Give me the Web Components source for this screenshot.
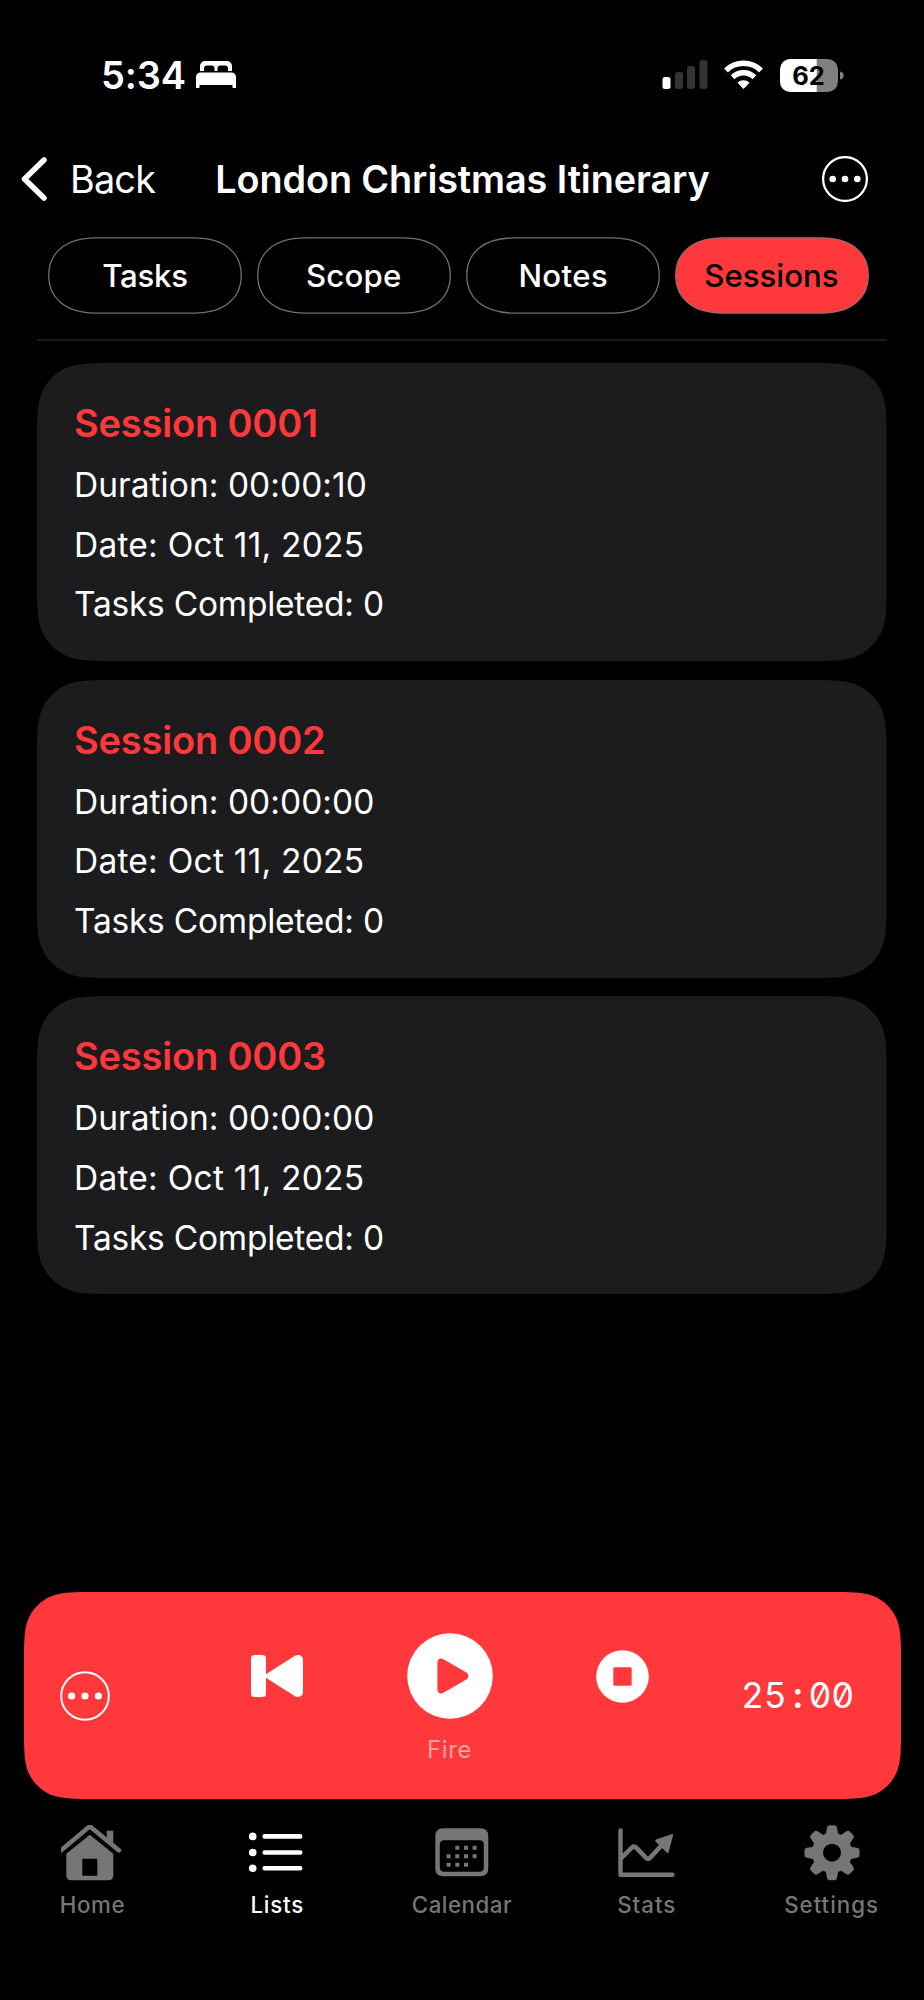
<!DOCTYPE html>
<html lang="en">
<head>
<meta charset="utf-8">
<title>London Christmas Itinerary</title>
<style>
html,body{margin:0;background:#000;}
body{width:924px;height:2000px;overflow:hidden;font-family:Inter,"Liberation Sans",sans-serif;color:#fff;}
</style>
</head>
<body>
<session-app></session-app>
<script>
const define = (name, html, setup) => {
  const template = document.createElement('template');
  template.innerHTML = html;
  customElements.define(name, class extends HTMLElement {
    connectedCallback() {
      if (this.shadowRoot) return;
      const root = this.attachShadow({ mode: 'open' });
      root.append(template.content.cloneNode(true));
      if (setup) setup(this, root);
    }
  });
};

// Outline of a rounded rectangle whose corners ease into the straight edges.
const smoothPath = (w, h, r) => {
  const a = 1.52866 * r, b = 1.08849 * r, c = 0.86841 * r, d = 0.63149 * r, e = 0.07491 * r, f = 0.37282 * r, g = 0.16906 * r;
  return `M${a} 0H${w - a}C${w - b} 0 ${w - c} 0 ${w - d} ${e}C${w - f} ${g} ${w - g} ${f} ${w - e} ${d}C${w} ${c} ${w} ${b} ${w} ${a}` +
    `V${h - a}C${w} ${h - b} ${w} ${h - c} ${w - e} ${h - d}C${w - g} ${h - f} ${w - f} ${h - g} ${w - d} ${h - e}C${w - c} ${h} ${w - b} ${h} ${w - a} ${h}` +
    `H${a}C${b} ${h} ${c} ${h} ${d} ${h - e}C${f} ${h - g} ${g} ${h - f} ${e} ${h - d}C0 ${h - c} 0 ${h - b} 0 ${h - a}` +
    `V${a}C0 ${b} 0 ${c} ${e} ${d}C${g} ${f} ${f} ${g} ${d} ${e}C${c} 0 ${b} 0 ${a} 0Z`;
};

define('status-bar', `
<style>
:host{display:flex;height:149px;box-sizing:border-box;padding:1px 79px 0 101px;align-items:center;justify-content:space-between}
.left,.right{display:flex;align-items:center}
.time{font-size:38px;font-weight:600;line-height:46px;letter-spacing:-.15px}
svg{display:block}
.bed{margin-left:10px}
.wifi{margin-left:16px}
.battery{position:relative;margin-left:17.500px}
.battery span{position:absolute;left:0;top:0;width:57px;height:33px;line-height:33px;text-align:center;color:#000;font-size:25.500px;font-weight:700}
</style>
<div class="left"><span class="time">5:34</span>
<svg class="bed" width="40" height="28" viewBox="0 0 40 28" fill="#fff"><path d="M4 10V5a5 5 0 0 1 5-5h22a5 5 0 0 1 5 5v5h-4V7.500a3 3 0 0 0-3-3h-4.500a3 3 0 0 0-3 3V10h-3V7.500a3 3 0 0 0-3-3H11a3 3 0 0 0-3 3V10z"/><path d="M0 27V16a4.500 4.500 0 0 1 4.500-4.500h31A4.500 4.500 0 0 1 40 16v11h-3.500v-3h-33v3z"/></svg></div>
<div class="right">
<svg width="46" height="30" viewBox="0 0 46 30"><rect x=".5" y="17" width="8" height="12" rx="2.500" fill="#fff"/><g fill="#333"><rect x="13" y="12" width="8" height="17" rx="2.500"/><rect x="25" y="6" width="8" height="23" rx="2.500"/><rect x="37.500" y="0" width="8" height="29" rx="2.500"/></g></svg>
<svg class="wifi" width="39" height="30" viewBox="0 0 39 30" fill="none" stroke="#fff"><path d="M2 10.400A25 25 0 0 1 37 10.400" stroke-width="5.600"/><path d="M8.600 17.200A15.600 15.600 0 0 1 30.400 17.200" stroke-width="5.400"/><path d="M19.500 29l-6-6.200a8.500 8.500 0 0 1 12 0z" fill="#fff" stroke="none"/></svg>
<div class="battery"><svg width="65" height="33" viewBox="0 0 65 33"><defs><clipPath id="b"><rect width="58" height="33" rx="10.500"/></clipPath></defs><g clip-path="url(#b)"><rect width="58" height="33" fill="#808080"/><rect width="36.700" height="33" fill="#fff"/></g><path d="M60 12.500c5 1 5 7 0 8z" fill="#808080"/></svg><span>62</span></div>
</div>`);

define('more-icon', `
<style>:host{display:block}svg{display:block;width:100%;height:100%}.ring{stroke-width:var(--sw,2)}</style>
<svg viewBox="0 0 50 50" fill="none" stroke="#fff"><circle class="ring" cx="25" cy="25" r="23.800"/><g fill="#fff" stroke="none"><circle cx="11.600" cy="25" r="3.600"/><circle cx="25" cy="25" r="3.600"/><circle cx="38.400" cy="25" r="3.600"/></g></svg>`);

define('nav-header', `
<style>
:host{display:grid;grid-template-columns:minmax(0,1fr) auto minmax(0,1fr);align-items:center;height:60px;padding:0 20.500px 0 21.500px;font-size:37.800px}
.back{display:flex;align-items:center}
.back svg{display:block;margin-left:-.500px}
.back span{margin-left:23px;letter-spacing:-.8px}
h1{margin:0;font-size:inherit;font-weight:600;letter-spacing:-.1px;white-space:nowrap}
more-icon{width:46px;height:46px;justify-self:end;margin-right:35.500px;--sw:2.500}
</style>
<div class="back"><svg width="26" height="44" viewBox="0 0 26 44"><path d="M23 3L3.500 22 23 41" fill="none" stroke="#fff" stroke-width="5.500" stroke-linecap="round" stroke-linejoin="round"/></svg><span>Back</span></div>
<h1><slot></slot></h1><more-icon></more-icon>`);

define('pill-tab', `
<style>
:host{display:grid;width:194px;height:77px;place-items:center}
svg,span{grid-area:1/1}
svg{display:block;fill:none;stroke:#707072;stroke-width:1.300}
span{font-size:31.200px;font-weight:500;line-height:38px;letter-spacing:var(--ls,0);margin-left:var(--dx,0)}
:host([active]) svg{fill:#ff383c;stroke:#a4686c}
:host([active]) span{color:#000}
</style>
<svg width="194" height="77" viewBox="0 0 194 77"><path d="M.7 38.500C.7 17 16 .9 48 .9H146C178 .9 193.300 17 193.300 38.500S178 76.100 146 76.100H48C16 76.100 .7 60 .7 38.500Z"/></svg>
<span><slot></slot></span>`);

define('pill-tabs', `
<style>:host{display:flex;justify-content:space-between;padding:0 54.500px 0 48px;margin-top:28px}</style><slot></slot>`);

define('smooth-panel', `
<style>
:host{display:grid}
svg,div{grid-area:1/1}
svg{display:block;overflow:visible}
</style>
<svg><path/></svg><div><slot></slot></div>`, (host, root) => {
  const w = +host.getAttribute('w'), h = +host.getAttribute('h');
  const svg = root.querySelector('svg');
  svg.setAttribute('width', w);
  svg.setAttribute('height', h);
  const p = root.querySelector('path');
  p.setAttribute('d', smoothPath(w, h, +host.getAttribute('r')));
  p.setAttribute('fill', host.getAttribute('color'));
});

define('session-card', `
<style>
:host{display:block;height:298px}
.body{padding:27px 37px 0;display:flex;flex-direction:column}
h2{margin:0;height:66px;line-height:66px;font-size:38px;font-weight:600;color:#ff383c;letter-spacing:-.18px}
p{margin:0;height:59.600px;line-height:59.600px;font-size:33.500px}
.a{letter-spacing:.05px}.b{letter-spacing:.24px}.c{letter-spacing:-.24px}
</style>
<smooth-panel w="849.500" h="298" r="51" color="#1c1c1e"><div class="body">
<h2><slot></slot></h2>
<p class="a">Duration: <slot name="duration"></slot></p>
<p class="b">Date: <slot name="date"></slot></p>
<p class="c">Tasks Completed: <slot name="tasks"></slot></p></div></smooth-panel>`);

define('session-list', `
<style>:host{display:flex;flex-direction:column;gap:18.600px;margin:22.200px 37px 0}</style><slot></slot>`);

define('player-bar', `
<style>
:host{display:block;width:877px}
.row{display:flex;height:207px;align-items:center}
more-icon{width:50px;height:50px;margin-left:36px;--sw:2}
.prev{margin-left:141px;margin-top:-40px}
.mid{margin-left:104px;width:86px;display:flex;flex-direction:column;align-items:center;margin-top:6px}
.mid span{font-size:23.800px;line-height:30px;margin-top:16px;color:#ffa3a5;letter-spacing:.7px}
.stop{margin-left:103.500px;margin-top:-38px}
.timer{display:flex;margin-left:92px;font-size:35.500px;font-weight:400;font-feature-settings:"zero","tnum";letter-spacing:-.3px;white-space:nowrap}
.timer i{font-style:normal;width:22px;text-align:center;font-weight:600}
svg{display:block}
</style>
<smooth-panel w="877" h="207" r="46" color="#ff383c"><div class="row">
<more-icon></more-icon>
<svg class="prev" width="52" height="42" viewBox="0 0 52 42" fill="#fff"><rect width="15" height="42" rx="3.500"/><path d="M14.500 19.500L44 .8C47.500-1 52 .8 52 5v32c0 4.200-4.500 6-8 4.200L14.500 22.500q-2-1.500 0-3z"/></svg>
<div class="mid"><svg width="86" height="86" viewBox="0 0 86 86"><circle cx="43" cy="43" r="42.800" fill="#fff"/><path d="M30.400 29.500c0-3.500 3-5 6-3.200l23 13.200c2.600 1.700 2.600 5.300 0 7L36.400 59.700c-3 1.800-6 .3-6-3.200z" fill="#ff383c"/></svg><span>Fire</span></div>
<svg class="stop" width="53" height="53" viewBox="0 0 53 53"><circle cx="26.500" cy="26.500" r="26.300" fill="#fff"/><rect x="17.300" y="17.300" width="18.400" height="18.400" rx="1.500" fill="#ff383c"/></svg>
<span class="timer">25<i>:</i>00</span>
</div></smooth-panel>`);

const icons = {
  home: '<g transform="translate(-2.200 -.7)"><path d="M2.300 26L29.500 3.300Q31 2 32.500 3.300L60 26" fill="none" stroke="currentColor" stroke-width="4.600" stroke-linecap="round"/><path d="M48 6.500h6.500V20L48 14.500z"/><path fill-rule="evenodd" d="M31 10.500L54.500 29.500V51q0 5-5 5h-37q-5 0-5-5V29.500zM24 34.500q-.5 0-.5.500V51.500h15V35q0-.5-.5-.5z"/></g>',
  lists: '<g transform="translate(-1 0)"><circle cx="7.700" cy="11.400" r="3.800"/><circle cx="7.700" cy="27.500" r="3.800"/><circle cx="7.700" cy="43.300" r="3.800"/><path d="M19.700 11.400H55.200M19.700 27.500H55.200M19.700 43.300H55.200" stroke="currentColor" stroke-width="4.600" stroke-linecap="round"/></g>',
  calendar: '<g transform="translate(-.7 -.8)"><path fill-rule="evenodd" d="M13 4h37q8 0 8 8v32q0 8-8 8H13q-8 0-8-8V12q0-8 8-8zM14 16q-4.500 0-4.500 4.500V43q0 4.500 4.500 4.500H49.500q4 0 4-4.500V20.500Q53.500 16 49.500 16z"/><path d="M25 21.500h4v4h-4zM33.700 21.500h4v4h-4zM42.300 21.500h4v4h-4zM16.300 30h4v4h-4zM25 30h4v4h-4zM33.700 30h4v4h-4zM42.300 30h4v4h-4zM16.300 38.500h4v4h-4zM25 38.500h4v4h-4zM33.700 38.500h4v4h-4z"/></g>',
  stats: '<g transform="translate(-.5 -.6)"><path d="M5 6V50.300H57M5.500 34L16.500 23Q18.500 21.300 20.500 23L30.500 33.500Q32.500 35.300 34.500 33.500L47 20" fill="none" stroke="currentColor" stroke-width="4.500" stroke-linecap="round" stroke-linejoin="round"/><path d="M57.500 11L53 28q-.5 1.500-1.600 .4L40 17q-1-1.200.5-1.800L56 9.800q2-.5 1.500 1.200z"/></g>'
};
// Gear: eight teeth around a ring.
icons.settings = '<g transform="translate(0 -.8)">' +
  Array.from({ length: 8 }, (_, i) => `<path transform="rotate(${i * 45} 31 28.500)" d="M22.500 14Q25.300 10 26 3.500Q26.400 1 28.500 1h5Q35.600 1 36 3.500Q36.700 10 39.500 14z"/>`).join('') +
  '<circle cx="31" cy="28.500" r="14.500" fill="none" stroke="currentColor" stroke-width="11"/></g>';

define('tab-item', `
<style>
:host{display:flex;flex-direction:column;align-items:center;flex:1;color:#767676}
:host([active]){color:#fff}
svg{display:block}
span{font-size:22.300px;font-weight:500;line-height:28px;margin-top:8px;letter-spacing:var(--ls,0)}
</style>
<svg width="62" height="58" viewBox="0 0 62 58" fill="currentColor"></svg><span><slot></slot></span>`,
(host, root) => { root.querySelector('svg').innerHTML = icons[host.getAttribute('icon')]; });

define('tab-bar', `<style>:host{display:flex;width:924px}</style><slot></slot>`);

define('session-app', `
<style>
:host{display:flex;flex-direction:column;height:2000px;background:#000}
hr{border:0;height:2px;background:#1b1b1b;margin:25px 37px 0;flex:none}
player-bar{margin:auto 0 0 23.600px}
tab-bar{height:175px;margin-top:26px;flex:none}
status-bar,nav-header,pill-tabs{flex:none}
</style>
<status-bar></status-bar>
<nav-header>London Christmas Itinerary</nav-header>
<pill-tabs><pill-tab style="--ls:-.3px">Tasks</pill-tab><pill-tab style="--ls:.17px;--dx:-1px">Scope</pill-tab><pill-tab style="--ls:.4px">Notes</pill-tab><pill-tab active style="--dx:-2px">Sessions</pill-tab></pill-tabs>
<hr>
<session-list>
<session-card>Session 0001<span slot="duration">00:00:10</span><span slot="date">Oct 11, 2025</span><span slot="tasks">0</span></session-card>
<session-card>Session 0002<span slot="duration">00:00:00</span><span slot="date">Oct 11, 2025</span><span slot="tasks">0</span></session-card>
<session-card>Session 0003<span slot="duration">00:00:00</span><span slot="date">Oct 11, 2025</span><span slot="tasks">0</span></session-card>
</session-list>
<player-bar></player-bar>
<tab-bar><tab-item icon="home" style="--ls:.6px">Home</tab-item><tab-item icon="lists" active style="--ls:.8px">Lists</tab-item><tab-item icon="calendar" style="--ls:.53px">Calendar</tab-item><tab-item icon="stats" style="--ls:1px">Stats</tab-item><tab-item icon="settings" style="--ls:1px">Settings</tab-item></tab-bar>`);
</script>
</body>
</html>
